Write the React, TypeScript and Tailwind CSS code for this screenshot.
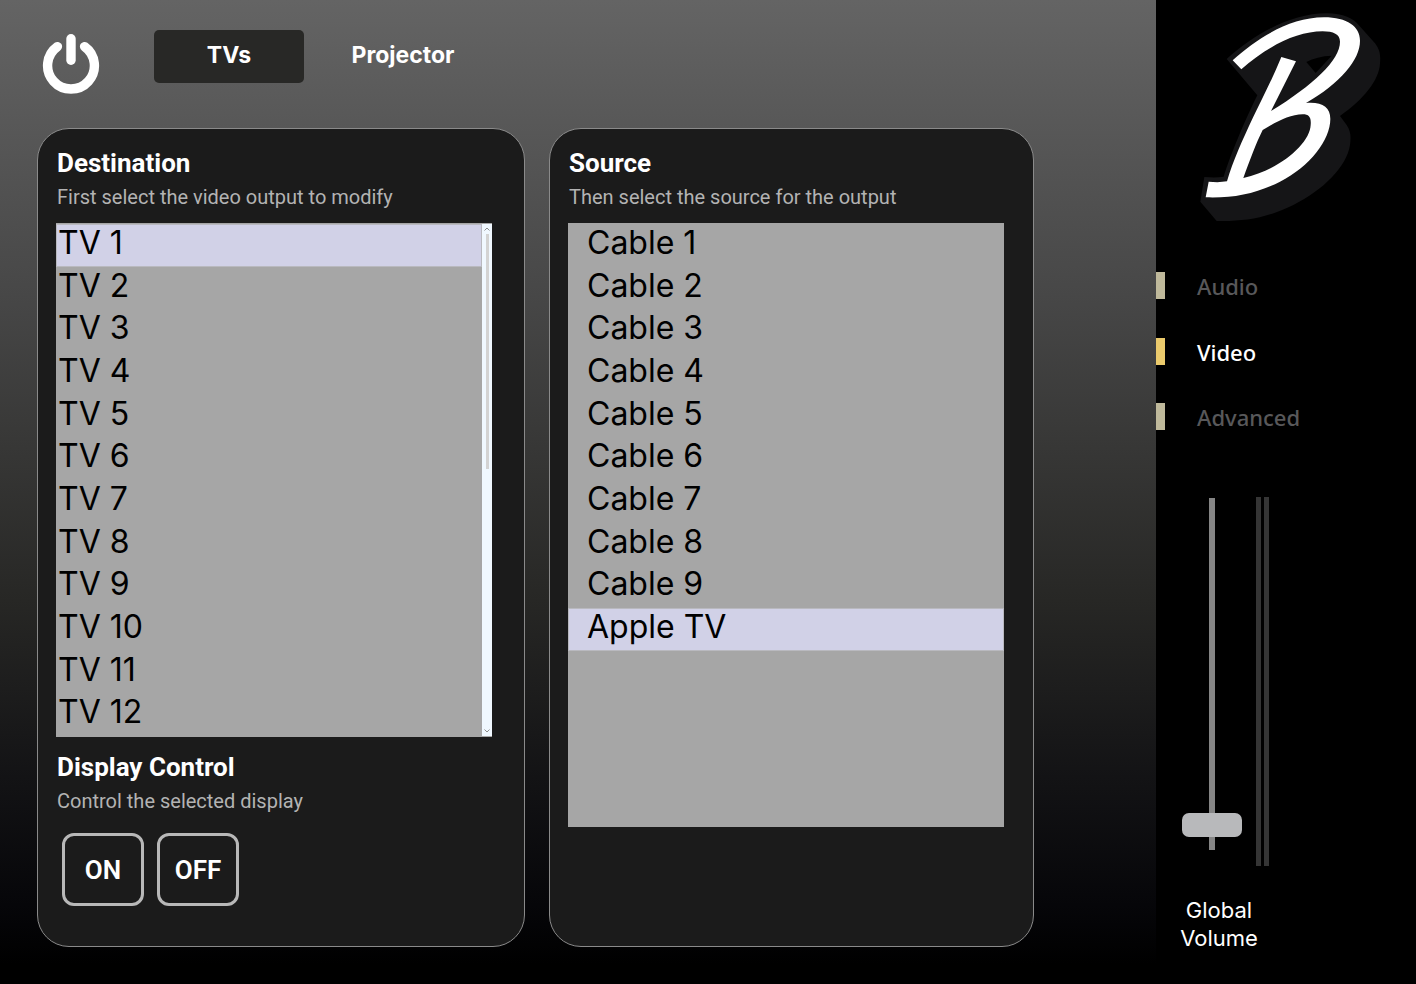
import { useState } from "react";

const tvs = Array.from({ length: 12 }, (_, i) => `TV ${i + 1}`);
const sources = [
  ...Array.from({ length: 9 }, (_, i) => `Cable ${i + 1}`),
  "Apple TV",
];

function PowerIcon() {
  return (
    <svg viewBox="0 0 58 62" className="h-[62px] w-[58px]" fill="none" stroke="white" strokeWidth="9.4" strokeLinecap="round" aria-hidden="true">
      <path d="M15.4 14.6A23.4 23.4 0 1 0 42.6 14.6" />
      <path d="M29 6.7V28.3" />
    </svg>
  );
}

function Logo() {
  return (
    <svg viewBox="18 0 780 720" className="h-[240px] w-[260px]" role="img" aria-label="Logo">
      <path
        fill="#151517"
        fillRule="evenodd"
        d="M230 177C310 105 420 40 530 40C580 40 610 55 628 77L675 130C690 150 692 165 690 190C688 240 640 300 570 348L590 375C603 395 603 410 600 435C590 500 520 570 430 615C350 655 280 665 200 663L151 605L163 531C185 533 205 533 221 530C240 470 280 370 322 286ZM469 186C490 175 515 168 545 167L497 219Z"
      />
      <path
        fill="white"
        fillRule="evenodd"
        d="M248 181C320 115 420 52 522 52C592 52 630 80 630 122C630 180 570 250 468 309C515 305 541 320 541 357C541 420 480 500 390 545C320 580 250 595 167 592L176 545C195 547 215 547 231 544C250 480 275 425 310 350C340 290 370 230 394 171L438 184L363 333C490 255 570 180 570 125C570 103 550 94 518 94C440 94 350 140 274 208ZM338 390C380 365 420 343 458 343C478 343 484 353 482 375C480 430 390 510 280 534C300 480 318 430 338 390Z"
      />
    </svg>
  );
}

function PanelHeading({ title, note }: { title: string; note: string }) {
  return (
    <div className="px-px font-[Roboto,sans-serif]">
      <h2 className="text-[26px] leading-8 font-bold text-white">{title}</h2>
      <p className="mt-1 text-[20px] leading-7 text-[#b3b3b3]">{note}</p>
    </div>
  );
}

function Option({ label, selected, onSelect, indent }: { label: string; selected: boolean; onSelect: () => void; indent: string }) {
  return (
    <button
      type="button"
      role="option"
      aria-selected={selected}
      onClick={onSelect}
      className={`flex w-full items-center border pb-[5px] text-left text-[32px] leading-9 text-black ${indent} ${
        selected ? "border-[#b9b9bf] bg-[#d1d1e7]" : "border-transparent"
      }`}
    >
      {label}
    </button>
  );
}

const navItems = ["Audio", "Video", "Advanced"];

export default function App() {
  const [tab, setTab] = useState("TVs");
  const [tv, setTv] = useState("TV 1");
  const [source, setSource] = useState("Apple TV");
  const [page, setPage] = useState("Video");
  const [volume, setVolume] = useState(4);

  return (
    <div className="flex min-h-screen bg-black font-[Inter,sans-serif]">
      <main className="flex flex-1 flex-col bg-[linear-gradient(180deg,#646464_0%,#474747_30%,#272725_61%,#131315_79%,#060609_92%,#000000_98%)] pt-[30px] pr-[122px] pb-[37px] pl-[37px]">
        <header className="flex h-[98px] items-start">
          <button type="button" aria-label="Power" className="mt-0.5 ml-[5px]">
            <PowerIcon />
          </button>
          <nav className="ml-[54px] flex gap-6">
            {["TVs", "Projector"].map((name) => (
              <button
                key={name}
                type="button"
                onClick={() => setTab(name)}
                className={`h-[53px] w-[150px] rounded-[5px] pb-0.5 text-[23px] font-bold text-white ${tab === name ? "bg-[#282826]" : ""}`}
              >
                {name}
              </button>
            ))}
          </nav>
        </header>

        <div className="grid flex-1 grid-cols-[488fr_485fr] gap-6">
          <section className="rounded-[32px] border border-[#8a8a8a] bg-[#1b1b1b] pt-[18px] pr-8 pb-10 pl-[18px]">
            <PanelHeading title="Destination" note="First select the video output to modify" />
            <div className="mt-3 flex h-[514px] bg-[#a6a6a6] py-px">
              <div role="listbox" aria-label="Destination" className="grid flex-1 grid-rows-12">
                {tvs.map((name) => (
                  <Option key={name} label={name} selected={tv === name} onSelect={() => setTv(name)} indent="pl-px" />
                ))}
              </div>
              <div className="flex w-2.5 flex-col items-center bg-[#f0f8ff] py-[3px]" aria-hidden="true">
                <svg viewBox="0 0 6 4" className="h-1 w-1.5" fill="none" stroke="#8c8c8c"><path d="M.5 3.5L3 1L5.5 3.5" /></svg>
                <div className="mt-[3px] h-[235px] w-[3px] bg-[#d3d3d3]" />
                <svg viewBox="0 0 6 4" className="mt-auto h-1 w-1.5" fill="none" stroke="#8c8c8c"><path d="M.5 .5L3 3L5.5 .5" /></svg>
              </div>
            </div>
            <div className="mt-[14px]">
              <PanelHeading title="Display Control" note="Control the selected display" />
            </div>
            <div className="mt-[18px] ml-1.5 flex gap-[13px] font-[Roboto,sans-serif]">
              {["ON", "OFF"].map((name) => (
                <button key={name} type="button" className="h-[73px] w-[82px] rounded-xl border-3 border-[#b8b8b8] pt-0.5 text-[26px] font-semibold text-white">
                  {name}
                </button>
              ))}
            </div>
          </section>

          <section className="rounded-[32px] border border-[#8a8a8a] bg-[#1b1b1b] pt-[18px] pr-[29px] pb-10 pl-[18px]">
            <PanelHeading title="Source" note="Then select the source for the output" />
            <div className="mt-3 h-[604px] bg-[#a6a6a6] pt-px">
              <div role="listbox" aria-label="Source" className="grid h-[427px] grid-rows-10">
                {sources.map((name) => (
                  <Option key={name} label={name} selected={source === name} onSelect={() => setSource(name)} indent="pl-[18px]" />
                ))}
              </div>
            </div>
          </section>
        </div>
      </main>

      <aside className="flex w-[260px] flex-col bg-black">
        <Logo />
        <nav className="mt-8 flex h-[158px] flex-col justify-between">
          {navItems.map((name) => (
            <a
              key={name}
              href={`#${name.toLowerCase()}`}
              onClick={() => setPage(name)}
              className={`flex h-[27px] items-center gap-8 font-['Noto_Sans',sans-serif] text-[22px] font-medium ${page === name ? "text-white" : "text-[#58585a]"}`}
            >
              <span className={`h-[27px] w-[9px] ${page === name ? "bg-[#ebca6c]" : "bg-[#bfb99b]"}`} />
              <span className="pt-0.5">{name}</span>
            </a>
          ))}
        </nav>
        <div className="mt-[67px] flex gap-[14px] pl-[26px]">
          <input
            id="volume"
            type="range"
            min={0}
            max={100}
            value={volume}
            onChange={(e) => setVolume(Number(e.target.value))}
            className="mt-px h-[352px] w-[60px] appearance-none bg-[linear-gradient(90deg,transparent_27px,#858585_27px,#858585_33px,transparent_33px)] [direction:rtl] [writing-mode:vertical-lr] [&::-webkit-slider-thumb]:h-6 [&::-webkit-slider-thumb]:w-[60px] [&::-webkit-slider-thumb]:appearance-none [&::-webkit-slider-thumb]:rounded-[7px] [&::-webkit-slider-thumb]:bg-[#b8b9bb]"
          />
          <div className="flex gap-[3px]">
            <div className="h-[369px] w-[5px] bg-[#353535]" />
            <div className="h-[369px] w-[5px] bg-[#353535]" />
          </div>
        </div>
        <label htmlFor="volume" className="mt-[30px] w-[126px] px-5 text-center text-[22px] leading-7 text-white">
          Global Volume
        </label>
      </aside>
    </div>
  );
}
